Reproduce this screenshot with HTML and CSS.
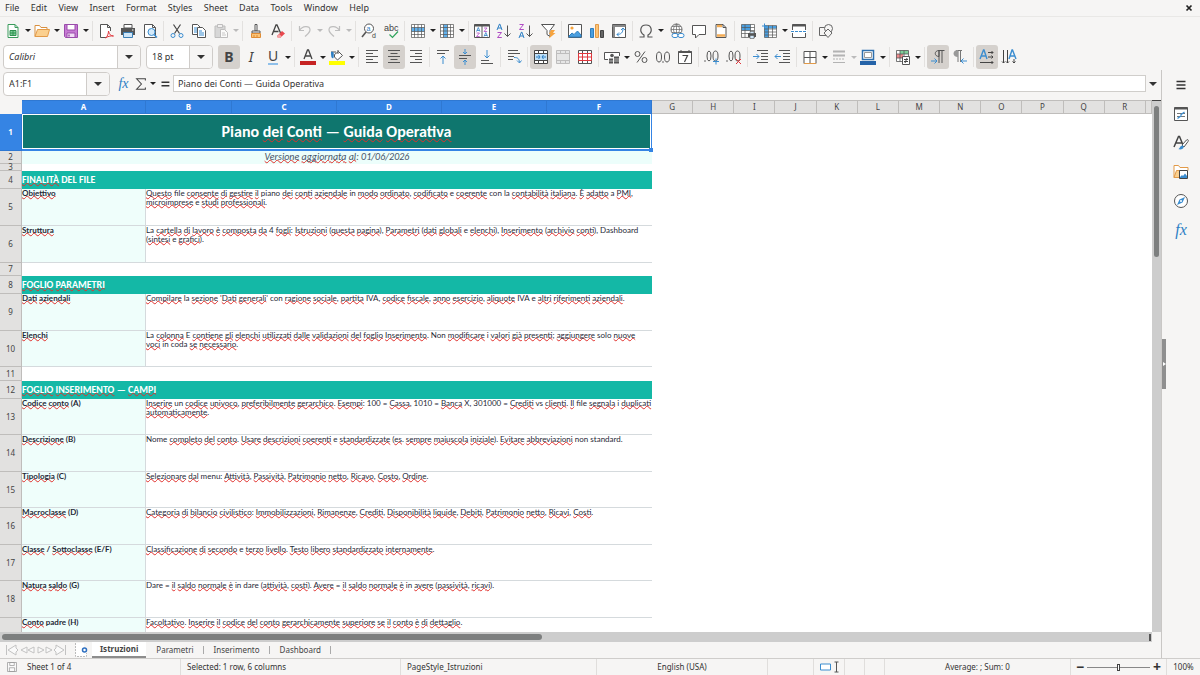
FILE: index.html
```html
<!DOCTYPE html>
<html lang="it">
<head>
<meta charset="utf-8">
<title>Piano dei Conti</title>
<link rel="stylesheet" href="styles.css">
</head>
<body>
<nav class="menubar">
  <div class="menus"><button>File</button><button>Edit</button><button>View</button><button>Insert</button><button>Format</button><button>Styles</button><button>Sheet</button><button>Data</button><button>Tools</button><button>Window</button><button>Help</button></div>
  <button class="close" aria-label="Close"><svg viewBox="0 0 8 8"><path d="M1.500 1.500l5 5M6.500 1.500l-5 5" stroke="#222" stroke-width="1.700"/></svg></button>
</nav>

<div class="toolbar" role="toolbar" aria-label="Standard">
  <button class="tb" aria-label="New"><svg viewBox="0 0 16 16"><path d="M3 1.500h7l3 3v10H3z" fill="#fff" stroke="#3a9b5c"/><path d="M10 1.500v3h3" stroke="#3a9b5c"/><path d="M5 7.500h6v5H5zM5 10h6M8 7.500v5" fill="#7fd09a" stroke="#2f9150"/></svg></button><button class="caret" aria-label="New options"></button>
  <button class="tb" aria-label="Open"><svg viewBox="0 0 16 16"><path d="M1 13.500v-11h4.500l1.500 2h6v2" fill="#fff" stroke="#d9903f"/><path d="M1 13.500l2.500-7h12l-2 7z" fill="#fbd08f" stroke="#e29a48"/></svg></button><button class="caret" aria-label="Open options"></button>
  <button class="tb" aria-label="Save"><svg viewBox="0 0 16 16"><path d="M1.500 1.500h13v13h-12l-1-1z" fill="#c77ad4" stroke="#9a4cab"/><path d="M4 1.500h8v5.500H4z" fill="#fff" stroke="#9a4cab"/><path d="M4 10h8v4.500H4z" fill="#f1dcf5" stroke="#9a4cab"/><path d="M6 11.500v2" stroke="#9a4cab" stroke-width="1.500"/></svg></button><button class="caret" aria-label="Save options"></button>
  <i class="sep"></i>
  <button class="tb" aria-label="Export as PDF"><svg viewBox="0 0 16 16"><path d="M8 14.500H2.500v-13h7l3 3V8M9.500 1.500v3h3" fill="#fff" stroke="#555"/><path d="M7.500 15c2-1.500 3-4.500 3-7 .5 3.500 2.500 5 5 5-3-.5-6 .5-8 2z" fill="#fff" stroke="#e0383e"/></svg></button>
  <button class="tb" aria-label="Print"><svg viewBox="0 0 16 16"><path d="M4 1.500h8V5H4z" fill="#fff" stroke="#555"/><path d="M1 5h14v7H1z" fill="#555"/><path d="M3.500 9.500h9v5h-9z" fill="#cfe6f8" stroke="#3c7fb4"/><path d="M12 7h1.500" stroke="#fff"/></svg></button>
  <button class="tb" aria-label="Print preview"><svg viewBox="0 0 16 16"><path d="M2.500 1.500h8l3 3v10h-11z" fill="#fff" stroke="#555"/><path d="M10.500 1.500v3h3" stroke="#555"/><circle cx="9.500" cy="9" r="3.500" fill="#d4eafa" stroke="#3b8dd0"/><path d="M12 11.500l3 3" stroke="#3b8dd0" stroke-width="1.500"/></svg></button>
  <i class="sep"></i>
  <button class="tb" aria-label="Cut"><svg viewBox="0 0 16 16"><path d="M4.500 1.500l6 9M11.500 1.500l-6 9" stroke="#444" stroke-width="1.200"/><circle cx="4" cy="12.500" r="2" stroke="#3b8dd0"/><circle cx="12" cy="12.500" r="2" stroke="#3b8dd0"/></svg></button>
  <button class="tb" aria-label="Copy"><svg viewBox="0 0 16 16"><path d="M1.500 1.500h5l3 3v7h-8z" fill="#fff" stroke="#555"/><path d="M3 5h3M3 7h3M3 9h3" stroke="#3b8dd0"/><path d="M6.500 4.500h5l3 3v7h-8z" fill="#fff" stroke="#555"/><path d="M8 8h3M8 10h5M8 12h5" stroke="#3b8dd0"/></svg></button>
  <button class="tb dim" aria-label="Paste"><svg viewBox="0 0 16 16"><path d="M2 3h10v11.500H2z" fill="#c4c4c4" stroke="#999"/><path d="M4.500 1.500h5v3h-5z" fill="#eee" stroke="#999"/><path d="M7.500 6.500h4l3 3v5h-7z" fill="#fff" stroke="#999"/><path d="M9 10h3M9 12h4" stroke="#aaa"/></svg></button><button class="caret dim" aria-label="Paste options"></button>
  <i class="sep"></i>
  <button class="tb" aria-label="Clone formatting"><svg viewBox="0 0 16 16"><path d="M7 1.500h2V8H7z" fill="#fff" stroke="#555"/><path d="M4 8h8v2H4z" fill="#fff" stroke="#555"/><path d="M3.500 10.500h9v4h-9z" fill="#fbc478" stroke="#df8c35"/><path d="M6 12v2M9 12v2" stroke="#df8c35"/></svg></button>
  <button class="tb" aria-label="Clear formatting"><svg viewBox="0 0 16 16"><path d="M2 12L6 2h1l4 9M3.500 8.500h5" stroke="#444" stroke-width="1.300"/><path d="M7 13l5-5 3 2.500-5 4.500H8z" fill="#e8484e"/><path d="M7 13l2-2 3 2.500-2 1.500H8z" fill="#f5a3a5"/></svg></button>
  <i class="sep"></i>
  <button class="tb dim" aria-label="Undo"><svg viewBox="0 0 16 16"><path d="M2.500 3v4.500H7M2.500 7.500c3-5 10-5 10.500-1 .3 3-3 5-5 7" stroke="#999" stroke-width="1.200"/></svg></button><button class="caret dim" aria-label="Undo list"></button>
  <button class="tb dim" aria-label="Redo"><svg viewBox="0 0 16 16"><path d="M13.500 3v4.500H9M13.500 7.500c-3-5-10-5-10.500-1-.3 3 3 5 5 7" stroke="#999" stroke-width="1.200"/></svg></button><button class="caret dim" aria-label="Redo list"></button>
  <i class="sep"></i>
  <button class="tb" aria-label="Find and replace"><svg viewBox="0 0 16 16"><circle cx="8" cy="5.500" r="4.500" fill="#fff" stroke="#555"/><path d="M5 9l-4 5" stroke="#555" stroke-width="1.600"/><text x="5.500" y="7.500" class="g md blue">a</text><text x="11" y="15" class="g md">d</text></svg></button>
  <button class="tb" aria-label="Spelling"><svg viewBox="0 0 16 16"><text x="1" y="8" class="g">abc</text><path d="M6.500 11.500l3 3 5.500-6" stroke="#2fa35c" stroke-width="1.200"/></svg></button>
  <i class="sep"></i>
  <button class="tb" aria-label="Row"><svg viewBox="0 0 16 16"><path d="M1.500 1.500h13v13h-13z" fill="#fff"/><path d="M1.500 4.500h13v4h-13z" fill="#62b1ec"/><path d="M1.500 1.500h13v13h-13zM1.500 4.500h13M1.500 8.500h13M1.500 11.500h13M4.500 1.500v13M8 1.500v13M11.500 1.500v13" stroke="#555" stroke-width=".7"/></svg></button><button class="caret" aria-label="Row options"></button>
  <button class="tb" aria-label="Column"><svg viewBox="0 0 16 16"><path d="M1.500 1.500h13v13h-13z" fill="#fff"/><path d="M4.500 1.500h4v13h-4z" fill="#62b1ec"/><path d="M1.500 1.500h13v13h-13zM1.500 4.500h13M1.500 8h13M1.500 11.500h13M4.500 1.500v13M8.500 1.500v13M11.500 1.500v13" stroke="#555" stroke-width=".7"/></svg></button><button class="caret" aria-label="Column options"></button>
  <i class="sep"></i>
  <button class="tb" aria-label="Sort"><svg viewBox="0 0 16 16"><path d="M.5 1.500h15v13H.5z" fill="#fff" stroke="#555"/><path d="M.5 1.500h15v2H.5z" fill="#555"/><path d="M8 3v11.500" stroke="#555"/><path d="M2.500 8.500L4.300 4.500 6 8.500M3 7.500h2.500M10 13.500l1.800-4 1.800 4M10.500 12.500H13" stroke="#2d7fc4" stroke-width=".8"/><path d="M2.500 10h3l-3 3.500h3.200M10 5h3l-3 3.500h3.200" stroke="#b04cc4" stroke-width=".8"/></svg></button>
  <button class="tb" aria-label="Sort ascending"><svg viewBox="0 0 16 16"><path d="M1 7l2.500-6h.3L6 7M1.800 5h3.500" stroke="#2d7fc4"/><path d="M1.500 9.500h4l-4 5h4.300" stroke="#b04cc4"/><path d="M11.500 2.500v11M8.500 10.500l3 3 3-3" stroke="#555"/></svg></button>
  <button class="tb" aria-label="Sort descending"><svg viewBox="0 0 16 16"><path d="M1.500 1.500h4l-4 5h4.300" stroke="#b04cc4"/><path d="M1 15l2.500-6h.3L6 15M1.800 13h3.500" stroke="#2d7fc4"/><path d="M11.500 2.500v11M8.500 10.500l3 3 3-3" stroke="#555"/></svg></button>
  <button class="tb" aria-label="AutoFilter"><svg viewBox="0 0 16 16"><path d="M1.500 1.500h13L10 7.500v6l-3-2v-4z" fill="#fff" stroke="#555"/><path d="M11 7h4l-2 3h2.500L9 15.500 10.500 11H9z" fill="#f6a33d"/></svg></button>
  <i class="sep"></i>
  <button class="tb" aria-label="Insert image"><svg viewBox="0 0 16 16"><path d="M1.500 1.500h13v13h-13z" fill="#fff" stroke="#555"/><circle cx="5" cy="5" r="1.600" fill="#f6a33d"/><path d="M2 13l3-3 2 1.500L10.500 8l3.500 4v2H2z" fill="#4a9fe0" stroke="#2e7fc0"/></svg></button>
  <button class="tb" aria-label="Insert chart"><svg viewBox="0 0 16 16"><path d="M1.500 5.500h3v9h-3z" fill="#4a9fe0" stroke="#2e7fc0"/><path d="M6.500 1.500h3v13h-3z" fill="#fbc478" stroke="#e29a48"/><path d="M11.500 7.500h3v7h-3z" fill="#666" stroke="#444"/></svg></button>
  <button class="tb" aria-label="Insert pivot table"><svg viewBox="0 0 16 16"><path d="M1.500 1.500h13v13h-13z" fill="#fff" stroke="#555"/><path d="M1.500 3h13M3 3v11.500" stroke="#888" stroke-width="2"/><path d="M6 11.500c4 0 6-2 6-6M10 7l2-2 2 2M8 9.500l-2 2 2 2" stroke="#3b8dd0"/></svg></button>
  <i class="sep"></i>
  <button class="tb" aria-label="Special character"><svg viewBox="0 0 16 16"><path d="M1.500 14h4.500v-2C1 9 2 2 8 2s7 7 2 10v2h4.500" stroke="#555" stroke-width="1.200"/></svg></button><button class="caret" aria-label="Special character list"></button>
  <i class="space"></i>
  <button class="tb" aria-label="Hyperlink"><svg viewBox="0 0 16 16"><circle cx="7.500" cy="6.500" r="5.500" fill="#fff" stroke="#666"/><path d="M2 6.500h11M7.500 1v11M3 3.500h9M3 9.500h9M7.500 1c-4 3-4 8 0 11M7.500 1c4 3 4 8 0 11" stroke="#666" stroke-width=".7"/><rect x="3" y="10.500" width="6" height="4" rx="2" fill="#fff" stroke="#3b8dd0"/><rect x="9" y="10.500" width="6" height="4" rx="2" fill="#fff" stroke="#3b8dd0"/></svg></button>
  <button class="tb" aria-label="Comment"><svg viewBox="0 0 16 16"><path d="M1.500 2.500h13v9H8L4.500 15v-3.500h-3z" fill="#fff" stroke="#555"/></svg></button>
  <button class="tb" aria-label="Headers and footers"><svg viewBox="0 0 16 16"><path d="M3 1.500h7l3 3v10H3z" fill="#fff" stroke="#555"/><path d="M4 3h5M4 12.500h8" stroke="#f3ac55" stroke-width="2.500"/><path d="M10 1.500v3h3" stroke="#555"/></svg></button>
  <i class="sep"></i>
  <button class="tb" aria-label="Define print area"><svg viewBox="0 0 16 16"><path d="M1.500 1.500h13v11h-13z" fill="#fff"/><path d="M1.500 1.500h9v6h-9z" fill="#4a9fe0"/><path d="M1.500 1.500h13v13h-13zM1.500 4.500h13M1.500 7.500h13M1.500 10.500h13M5 1.500v13M10.500 1.500v13" stroke="#555" stroke-width=".7"/><path d="M8 10h8v4H8z" fill="#555"/><path d="M10 8.500h4v2h-4zM10 12.500h4v3h-4z" fill="#cfe6f8" stroke="#555" stroke-width=".6"/></svg></button>
  <button class="tb" aria-label="Freeze rows and columns"><svg viewBox="0 0 16 16"><path d="M2.500 3.500h12v11h-12z" fill="#fff"/><path d="M2.500 3.500h4v11h-4zM2 3h13v2.500H2z" fill="#4a9fe0"/><path d="M2.500 2.500h12v12h-12zM2.500 6h12M2.500 9h12M2.500 12h12M6.500 2.500v12M10.500 2.500v12" stroke="#555" stroke-width=".7"/><path d="M0 3h5M2.500.5v5" stroke="#3b8dd0"/></svg></button><button class="caret" aria-label="Freeze options"></button>
  <button class="tb" aria-label="Split window"><svg viewBox="0 0 16 16"><path d="M1.500 1.500h13v13h-13z" fill="#fff" stroke="#555"/><path d="M1.500 2.500h13" stroke="#555" stroke-width="2"/><path d="M0 8.500h16" stroke="#fff" stroke-width="3"/><path d="M0 8.500h16" stroke="#3b8dd0" stroke-dasharray="3 1"/></svg></button>
  <i class="sep"></i>
  <button class="tb" aria-label="Draw functions"><svg viewBox="0 0 16 16"><path d="M1.500 4.500h8v8h-8z" stroke="#666"/><circle cx="10.500" cy="5.500" r="4" fill="#f6f5f4" stroke="#666"/><path d="M10 6l4 4-4 4.500L6 10z" fill="#f6f5f4" stroke="#666"/></svg></button>
</div>

<div class="toolbar fmt" role="toolbar" aria-label="Formatting">
  <div class="combo font"><input aria-label="Font name" value="Calibri"><button aria-label="Font list"></button></div>
  <div class="combo size"><input aria-label="Font size" value="18 pt"><button aria-label="Size list"></button></div>
  <button class="tb on" aria-label="Bold"><b>B</b></button>
  <button class="tb" aria-label="Italic"><em>I</em></button>
  <button class="tb" aria-label="Underline"><span class="ul">U</span></button><button class="caret" aria-label="Underline options"></button>
  <i class="sep"></i>
  <button class="tb" aria-label="Font color"><svg viewBox="0 0 16 16"><path d="M4 10L7.500 1h1L12 10M5.500 7h5" stroke="#444" stroke-width="1.300"/><path d="M0 12h16v4H0z" fill="#c62323"/></svg></button><button class="caret" aria-label="Font color list"></button>
  <button class="tb" aria-label="Highlighting"><svg viewBox="0 0 16 16"><path d="M5.500 5.500l4-3 4 4-5 4.500-3-3z" fill="#fff" stroke="#555"/><path d="M9 1v4M2 3h5" stroke="#555"/><path d="M2 3c3-1 3 1 2.500 6C2.500 10 2 8 2 3z" fill="#2d7fc4"/><path d="M0 12h16v4H0z" fill="#ff0"/></svg></button><button class="caret" aria-label="Highlighting list"></button>
  <i class="sep"></i>
  <button class="tb" aria-label="Align left"><svg viewBox="0 0 16 16"><path d="M2 1.500h12M2 4.500h7M2 7.500h12M2 10.500h7M2 13.500h12" stroke="#555"/></svg></button>
  <button class="tb on" aria-label="Align center"><svg viewBox="0 0 16 16"><path d="M2 1.500h12M4.500 4.500h7M2 7.500h12M4.500 10.500h7M2 13.500h12" stroke="#555"/></svg></button>
  <button class="tb" aria-label="Align right"><svg viewBox="0 0 16 16"><path d="M2 1.500h12M7 4.500h7M2 7.500h12M7 10.500h7M2 13.500h12" stroke="#555"/></svg></button>
  <i class="sep"></i>
  <button class="tb" aria-label="Align top"><svg viewBox="0 0 16 16"><path d="M2 1.500h12M2 4.500h8" stroke="#555"/><path d="M8 15V7M5.500 9.500L8 7l2.500 2.500" stroke="#3b8dd0"/></svg></button>
  <button class="tb on" aria-label="Center vertically"><svg viewBox="0 0 16 16"><path d="M2 6.500h12M2 9.500h8" stroke="#555"/><path d="M8 0v5M6 3l2 2 2-2M8 16v-5M6 13l2-2 2 2" stroke="#3b8dd0"/></svg></button>
  <button class="tb" aria-label="Align bottom"><svg viewBox="0 0 16 16"><path d="M2 14.500h12M2 11.500h8" stroke="#555"/><path d="M8 1v8M5.500 6.500L8 9l2.500-2.500" stroke="#3b8dd0"/></svg></button>
  <i class="sep"></i>
  <button class="tb" aria-label="Wrap text"><svg viewBox="0 0 16 16"><path d="M2 1.500h10M2 4.500h12M2 7.500h6M2 10.500h5" stroke="#555"/><path d="M8 8.500c4 0 5 1 5.500 5M11 11.500l2.500 2.500 2-2.500" stroke="#3b8dd0"/></svg></button>
  <i class="sep"></i>
  <button class="tb on" aria-label="Merge and center cells"><svg viewBox="0 0 16 16"><path d="M1.500 1.500h13v13h-13z" fill="#fff" stroke="#444"/><path d="M1.500 4.500h13M1.500 11.500h13M5.500 1.500v3M10.500 1.500v3M5.500 11.500v3M10.500 11.500v3" stroke="#444"/><path d="M2 5h12v6H2z" fill="#bfe0f8"/><path d="M3 8h4M13 8H9M5.500 6L7 8l-1.500 2M10.500 6L9 8l1.500 2" stroke="#2d7fc4"/></svg></button>
  <button class="tb dim" aria-label="Merge cells"><svg viewBox="0 0 16 16"><path d="M1.500 1.500h13v13h-13zM1.500 4.500h13M1.500 11.500h13M5.500 1.500v3M10.500 1.500v3M5.500 11.500v3M10.500 11.500v3" fill="#ddd" stroke="#999"/></svg></button>
  <button class="tb" aria-label="Split cells"><svg viewBox="0 0 16 16"><path d="M1.500 1.500h13v13h-13zM5.500 1.500v3M10.500 1.500v3M5.500 11.500v3M10.500 11.500v3" fill="#fff" stroke="#555"/><path d="M1.500 4.500h13v7h-13zM5.500 4.500v7M10.500 4.500v7M1.500 8h13" stroke="#e0383e"/></svg></button>
  <i class="sep"></i>
  <button class="tb" aria-label="Format as currency"><svg viewBox="0 0 16 16"><path d="M4 10.500H.5v-7h15V7" fill="#fff" stroke="#555"/><circle cx="8" cy="6.500" r="1.800" fill="#555"/><path d="M5 9.500h4v5H5zM10 7.500h5v7h-5z" fill="#555"/><path d="M10 10h5M10 12h5M5 12h4" stroke="#fff" stroke-width=".6"/></svg></button><button class="caret" aria-label="Currency list"></button>
  <button class="tb" aria-label="Format as percent"><svg viewBox="0 0 16 16"><circle cx="4.500" cy="5" r="2.500" stroke="#555"/><circle cx="11.500" cy="11" r="2.500" stroke="#555"/><path d="M12 2.500L4 13.500" stroke="#555"/></svg></button>
  <button class="tb" aria-label="Format as number"><svg viewBox="0 0 16 16"><ellipse cx="4" cy="8" rx="2.500" ry="5" stroke="#555"/><ellipse cx="12" cy="8" rx="2.500" ry="5" stroke="#555"/><circle cx="8" cy="13" r=".8" fill="#555"/></svg></button>
  <button class="tb" aria-label="Format as date"><svg viewBox="0 0 16 16"><path d="M1.500 2.500h13v12h-13z" fill="#fff" stroke="#555"/><path d="M1.500 3h13" stroke="#555" stroke-width="2"/><path d="M4 1v2M12 1v2" stroke="#555"/><path d="M5.500 6.500h5L7.500 13" stroke="#444" stroke-width="1.200"/></svg></button>
  <i class="sep"></i>
  <button class="tb" aria-label="Add decimal place"><svg viewBox="0 0 16 16"><circle cx="1" cy="12" r=".8" fill="#555"/><ellipse cx="5" cy="7" rx="2" ry="5" stroke="#555"/><ellipse cx="11.500" cy="7" rx="2.500" ry="5" stroke="#555"/><path d="M9 12.500h6M12 9.500v6" stroke="#3b8dd0"/></svg></button>
  <button class="tb" aria-label="Delete decimal place"><svg viewBox="0 0 16 16"><circle cx="1" cy="12" r=".8" fill="#555"/><ellipse cx="5" cy="7" rx="2" ry="5" stroke="#555"/><ellipse cx="11.500" cy="7" rx="2.500" ry="5" stroke="#555"/><path d="M10 10l5 5M15 10l-5 5" stroke="#e0383e"/></svg></button>
  <i class="sep"></i>
  <button class="tb" aria-label="Increase indent"><svg viewBox="0 0 16 16"><path d="M4 1.500h11M8 4.500h7M8 7.500h7M8 10.500h7M4 13.500h11" stroke="#555"/><path d="M0 7.500h6M3.500 5L6 7.500 3.500 10" stroke="#3b8dd0"/></svg></button>
  <button class="tb" aria-label="Decrease indent"><svg viewBox="0 0 16 16"><path d="M4 1.500h11M8 4.500h7M8 7.500h7M8 10.500h7M4 13.500h11" stroke="#555"/><path d="M0 7.500h6M2.500 5L0 7.500 2.500 10" stroke="#3b8dd0"/></svg></button>
  <i class="sep"></i>
  <button class="tb" aria-label="Borders"><svg viewBox="0 0 16 16"><path d="M2 14.500v-12h12v12M8 2.500v12M2 8.500h12" fill="#fff" stroke="#555"/><path d="M2 14.500h12" stroke="#e29a48"/></svg></button><button class="caret" aria-label="Borders list"></button>
  <button class="tb dim" aria-label="Border style"><svg viewBox="0 0 16 16"><path d="M2 2.500h12M2 6.500h12" stroke="#888" stroke-width="2"/><path d="M2 10h12" stroke="#888" stroke-dasharray="2 1"/><path d="M2 13.500h12" stroke="#888"/></svg></button><button class="caret dim" aria-label="Border style list"></button>
  <button class="tb" aria-label="Border color"><svg viewBox="0 0 16 16"><path d="M2.500 1.500h11v9h-11z" fill="#fff" stroke="#2d6fae" stroke-width="1.500"/><path d="M4.500 3.500h7v5h-7z" stroke="#999"/><path d="M0 12h16v4H0z" fill="#2563a8"/></svg></button><button class="caret" aria-label="Border color list"></button>
  <i class="sep"></i>
  <button class="tb" aria-label="Conditional formatting"><svg viewBox="0 0 16 16"><path d="M1.500 1.500h12v11h-12z" fill="#fff"/><path d="M5 1.500h8.500V5H5z" fill="#7fd09a"/><path d="M1.500 5H8v4H1.500z" fill="#f08a8c"/><path d="M1.500 1.500h12v11h-12zM1.500 5h12M1.500 9h12M5 1.500v11M9 1.500v11" stroke="#555" stroke-width=".8"/><path d="M7.500 7.500h7v8h-7z" fill="#fff" stroke="#555"/><path d="M9 10.500h4M9 12.500h4M12 9l-2 5" stroke="#444"/></svg></button><button class="caret" aria-label="Conditional list"></button>
  <i class="sep"></i>
  <button class="tb on" aria-label="Left to right"><svg viewBox="0 0 16 16"><path d="M9 1v13M12 1v13M8 1.500h6.500" stroke="#555"/><path d="M9 1.500c-5 0-5 6 0 6z" stroke="#555"/><path d="M1 12h6M4.500 9.500L7 12l-2.500 2.500" stroke="#3b8dd0"/></svg></button>
  <button class="tb" aria-label="Right to left"><svg viewBox="0 0 16 16"><path d="M6 1v12M8.500 1v12M4 1.500h6" stroke="#777"/><path d="M6 1c-6 0-6 7 0 7z" fill="#999"/><path d="M9 12h6M11.500 9.500L9 12l2.500 2.500" stroke="#3b8dd0"/></svg></button>
  <i class="sep"></i>
  <button class="tb on" aria-label="Text direction horizontal"><svg viewBox="0 0 16 16"><path d="M1 10L4.500 1h.5l3 9M2.500 7h4.500" stroke="#3b8dd0" stroke-width="1.400"/><path d="M9 3.500h5M12.500 2L14 3.500 12.500 5M9 8h5M12.500 6.500L14 8l-1.500 1.500M1 13.500h13M12.500 12l1.500 1.500-1.500 1.500" stroke="#444"/></svg></button>
  <button class="tb" aria-label="Text direction vertical"><svg viewBox="0 0 16 16"><path d="M8 10l3-9h.5L15 10M9 7h4.500" stroke="#3b8dd0" stroke-width="1.400"/><path d="M2.500 1v13M1 12.500L2.500 14 4 12.500M6.500 1v13M5 12.500L6.500 14 8 12.500M13 10v4M11.500 12.500L13 14l1.500-1.500" stroke="#444"/></svg></button>
</div>

<div class="work">
 <main class="doc">
  <div class="formula">
    <div class="combo name"><input aria-label="Name box" value="A1:F1"><button aria-label="Names"></button></div>
    <button class="fb" aria-label="Function wizard"><span class="fx">fx</span></button>
    <button class="fb" aria-label="Select function"><svg viewBox="0 0 16 16"><path d="M13 4V2H3l5.500 6L3 14h10v-2" stroke="#444" stroke-width="1.200"/></svg></button><button class="caret" aria-label="Function list"></button>
    <button class="fb" aria-label="Formula"><svg viewBox="0 0 16 16"><path d="M4 6h9M4 10h9" stroke="#333" stroke-width="1.600"/></svg></button>
    <input class="line" aria-label="Input line" value="Piano dei Conti — Guida Operativa">
    <button class="expand" aria-label="Expand formula bar"></button>
  </div>

  <div class="view">
   <div class="sheet">
    <table>
      <colgroup><col class="ch"><col class="ca"><col class="cb"><col class="cc"><col class="cc"><col class="cc"><col class="cc"><col span="12"><col class="ce"></colgroup>
      <thead><tr><td class="corner"></td><th class="sel">A</th><th class="sel">B</th><th class="sel">C</th><th class="sel">D</th><th class="sel">E</th><th class="sel">F</th><th>G</th><th>H</th><th>I</th><th>J</th><th>K</th><th>L</th><th>M</th><th>N</th><th>O</th><th>P</th><th>Q</th><th>R</th><th></th></tr></thead>
      <tbody>
      <tr class="r1"><th class="sel">1</th><td colspan="6" class="title">Piano <u>dei</u> <u>Conti</u> — <u>Guida</u> <u>Operativa</u></td></tr>
      <tr class="r2"><th>2</th><td colspan="6" class="sub"><u>Versione</u> <u>aggiornata</u> <u>al</u>: 01/06/2026</td></tr>
      <tr class="r3"><th>3</th><td colspan="6"></td></tr>
      <tr class="sec"><th>4</th><td colspan="6"><u>FINALITÀ</u> DEL FILE</td></tr>
      <tr class="tall more"><th>5</th><td class="k"><u>Obiettivo</u></td><td colspan="5"><u>Questo</u> file <u>consente</u> <u>di</u> <u>gestire</u> <u>il</u> piano <u>dei</u> <u>conti</u> <u>aziendale</u> in <u>modo</u> <u>ordinato</u>, <u>codificato</u> e <u>coerente</u> con la <u>contabilità</u> <u>italiana</u>. <u>È</u> <u>adatto</u> a <u>PMI</u>,<br><u>microimprese</u> e <u>studi</u> <u>professionali</u>.</td></tr>
      <tr class="tall more"><th>6</th><td class="k"><u>Struttura</u></td><td colspan="5">La <u>cartella</u> <u>di</u> <u>lavoro</u> <u>è</u> <u>composta</u> <u>da</u> 4 <u>fogli</u>: <u>Istruzioni</u> (<u>questa</u> <u>pagina</u>), <u>Parametri</u> (<u>dati</u> <u>globali</u> e <u>elenchi</u>), <u>Inserimento</u> (<u>archivio</u> <u>conti</u>), Dashboard<br>(<u>sintesi</u> e <u>grafici</u>).</td></tr>
      <tr class="gap less"><th>7</th><td colspan="6"></td></tr>
      <tr class="sec"><th>8</th><td colspan="6"><u>FOGLIO</u> <u>PARAMETRI</u></td></tr>
      <tr class="tall more"><th>9</th><td class="k"><u>Dati</u> <u>aziendali</u></td><td colspan="5"><u>Compilare</u> la <u>sezione</u> '<u>Dati</u> <u>generali</u>' con <u>ragione</u> <u>sociale</u>, <u>partita</u> IVA, <u>codice</u> <u>fiscale</u>, <u>anno</u> <u>esercizio</u>, <u>aliquote</u> IVA e <u>altri</u> <u>riferimenti</u> <u>aziendali</u>.</td></tr>
      <tr class="tall"><th>10</th><td class="k"><u>Elenchi</u></td><td colspan="5">La <u>colonna</u> E <u>contiene</u> <u>gli</u> <u>elenchi</u> <u>utilizzati</u> <u>dalle</u> <u>validazioni</u> <u>del</u> <u>foglio</u> <u>Inserimento</u>. Non <u>modificare</u> i <u>valori</u> <u>già</u> <u>presenti</u>; <u>aggiungere</u> solo <u>nuove</u><br><u>voci</u> in coda <u>se</u> <u>necessario</u>.</td></tr>
      <tr class="gap"><th>11</th><td colspan="6"></td></tr>
      <tr class="sec"><th>12</th><td colspan="6"><u>FOGLIO</u> <u>INSERIMENTO</u> — <u>CAMPI</u></td></tr>
      <tr class="tall"><th>13</th><td class="k"><u>Codice</u> <u>conto</u> (A)</td><td colspan="5"><u>Inserire</u> un <u>codice</u> <u>univoco</u>, <u>preferibilmente</u> <u>gerarchico</u>. <u>Esempi</u>: 100 = <u>Cassa</u>, 1010 = <u>Banca</u> X, 301000 = <u>Crediti</u> vs <u>clienti</u>. <u>Il</u> file <u>segnala</u> i <u>duplicati</u><br><u>automaticamente</u>.</td></tr>
      <tr class="tall more"><th>14</th><td class="k"><u>Descrizione</u> (B)</td><td colspan="5">Nome <u>completo</u> <u>del</u> <u>conto</u>. <u>Usare</u> <u>descrizioni</u> <u>coerenti</u> e <u>standardizzate</u> (<u>es</u>. <u>sempre</u> <u>maiuscola</u> <u>iniziale</u>). <u>Evitare</u> <u>abbreviazioni</u> non standard.</td></tr>
      <tr class="tall"><th>15</th><td class="k"><u>Tipologia</u> (C)</td><td colspan="5"><u>Selezionare</u> <u>dal</u> menu: <u>Attività</u>, <u>Passività</u>, <u>Patrimonio</u> <u>netto</u>, <u>Ricavo</u>, <u>Costo</u>, <u>Ordine</u>.</td></tr>
      <tr class="tall more"><th>16</th><td class="k"><u>Macroclasse</u> (D)</td><td colspan="5"><u>Categoria</u> <u>di</u> <u>bilancio</u> <u>civilistico</u>: <u>Immobilizzazioni</u>, <u>Rimanenze</u>, <u>Crediti</u>, <u>Disponibilità</u> <u>liquide</u>, <u>Debiti</u>, <u>Patrimonio</u> <u>netto</u>, <u>Ricavi</u>, <u>Costi</u>.</td></tr>
      <tr class="tall"><th>17</th><td class="k"><u>Classe</u> / <u>Sottoclasse</u> (E/F)</td><td colspan="5"><u>Classificazione</u> <u>di</u> <u>secondo</u> e <u>terzo</u> <u>livello</u>. <u>Testo</u> <u>libero</u> <u>standardizzato</u> <u>internamente</u>.</td></tr>
      <tr class="tall more"><th>18</th><td class="k"><u>Natura</u> <u>saldo</u> (G)</td><td colspan="5">Dare = <u>il</u> <u>saldo</u> <u>normale</u> <u>è</u> in dare (<u>attività</u>, <u>costi</u>). <u>Avere</u> = <u>il</u> <u>saldo</u> <u>normale</u> <u>è</u> in <u>avere</u> (<u>passività</u>, <u>ricavi</u>).</td></tr>
      <tr class="tall"><th></th><td class="k"><u>Conto</u> padre (H)</td><td colspan="5"><u>Facoltativo</u>. <u>Inserire</u> <u>il</u> <u>codice</u> <u>del</u> <u>conto</u> <u>gerarchicamente</u> <u>superiore</u> <u>se</u> <u>il</u> <u>conto</u> <u>è</u> <u>di</u> <u>dettaglio</u>.</td></tr>
      </tbody>
    </table>
   </div>
   <div class="vscroll"><div class="vthumb"></div></div>
  </div>
  <div class="hscroll"><div class="hthumb"></div><div class="hend"></div></div>
  <div class="tabs">
    <button class="nav" aria-label="Sheet navigation"><svg viewBox="0 0 62 14" class="navicon"><path d="M1.500 2v10M11 2L3 7l8 5V9l2-2-2-2zM22 4l-6 3 6 3zM29 4l-6 3 6 3zM33 4l6 3-6 3zM41 4l6 3-6 3zM51 2l8 5-8 5V9l-2-2 2-2zM60.500 2v10" fill="#fafafa" stroke="#c2c2c2"/></svg></button>
    <button class="add" aria-label="Add sheet"><svg viewBox="0 0 14 14"><path d="M1.500 0v13.500h11V10" fill="#fff" stroke="#bbb" stroke-dasharray="2 1"/><path d="M2 0h8v13H2z" fill="#fff"/><circle cx="10.500" cy="7" r="2" fill="#fff" stroke="#2d6fc0" stroke-width="1.500"/></svg></button>
    <button class="tab active">Istruzioni</button><button class="tab">Parametri</button><button class="tab">Inserimento</button><button class="tab">Dashboard</button>
  </div>
 </main>
 <div class="handle"></div>
 <aside class="side">
  <button aria-label="Sidebar settings"><svg viewBox="0 0 16 16"><path d="M3.500 4.500h9M3.500 8h9M3.500 11.500h9" stroke="#333" stroke-width="1.500"/></svg></button>
  <button aria-label="Properties"><svg viewBox="0 0 16 16"><path d="M1.500 1.500h13v13h-13z" fill="#fff" stroke="#555"/><path d="M1.500 2.500h13" stroke="#555" stroke-width="2"/><path d="M4 7.500h8M4 10.500h8" stroke="#777"/><path d="M7.500 9l4-3M4.500 12.500l4-3" stroke="#3b8dd0" stroke-width="1.300"/></svg></button>
  <button aria-label="Styles"><svg viewBox="0 0 16 16"><path d="M1 12L5.500 1.500h1L10 10M3 8h5.500" stroke="#444" stroke-width="1.500"/><path d="M9 10l4.500-5c1-1 2.500 0 1.500 1.500L11 12z" fill="#fff" stroke="#555"/><path d="M5 14c2 0 2-4 5-3.500 2 2-.5 5-5 3.500z" fill="#3b8dd0"/></svg></button>
  <button aria-label="Gallery"><svg viewBox="0 0 16 16"><path d="M1 13.500v-12h4.500l1.500 2h8v3" fill="#fff" stroke="#e29a48"/><path d="M1 13.500l2.500-7h5v7z" fill="#fbd08f" stroke="#e29a48"/><path d="M6.500 6.500h8v8h-8z" fill="#fff" stroke="#444"/><path d="M7 13l2-2 1 1 2-2.500 2 2.500v2H7z" fill="#3b8dd0"/></svg></button>
  <button aria-label="Navigator"><svg viewBox="0 0 16 16"><circle cx="8" cy="8" r="6.500" fill="#fff" stroke="#555"/><path d="M12 4L9.500 9.500 4 12l2.500-5.500z" fill="#3b8dd0"/><circle cx="8" cy="8" r="1" fill="#fff"/></svg></button>
  <button aria-label="Functions"><span class="fx large">fx</span></button>
 </aside>
</div>

<footer class="status">
  <div class="doc-info"><svg viewBox="0 0 16 16"><path d="M2 2h12v12H2zM5 2h6v4H5zM4.500 9h7v5h-7z" fill="#fafafa" stroke="#999"/></svg><span>Sheet 1 of 4</span></div>
  <div class="left">Selected: 1 row, 6 columns</div>
  <div class="left">PageStyle_Istruzioni</div>
  <div>English (USA)</div>
  <div></div>
  <div class="mode"><svg viewBox="0 0 20 12"><path d="M1.500 3h10v6h-10z" fill="#fff" stroke="#3b8dd0"/><path d="M15.500 1h4M15.500 11h4M17.500 1v10" stroke="#555"/></svg></div>
  <div></div><div></div>
  <div>Average: ; Sum: 0</div>
  <div class="zoom"><button aria-label="Zoom out">−</button><input type="range" aria-label="Zoom" value="50"><button aria-label="Zoom in">+</button></div>
  <div>100%</div>
</footer>
</body>
</html>
```

FILE: styles.css
```css
* { box-sizing: border-box; }
body { margin: 0; height: 100vh; overflow: hidden; display: flex; flex-direction: column; background: #f6f5f4; color: #333; font: 9px/12px "Noto Sans", sans-serif; }
button, input { font: inherit; color: inherit; border: 0; background: none; padding: 0; margin: 0; outline: 0; }
svg { fill: none; display: block; overflow: visible; }

.menubar { flex: none; display: flex; justify-content: space-between; height: 17px; border-bottom: 1px solid #e9e8e6; }
.menus { display: flex; justify-content: space-between; width: 374px; }
.menus button { padding: 0 5px; }
.close { padding: 0 7px; }
.close svg { width: 8px; height: 8px; }

.toolbar { flex: none; display: flex; align-items: center; height: 27px; padding: 0 2px; }
.toolbar.fmt { height: 26px; }
.tb { flex: none; width: 22px; height: 24px; display: grid; place-items: center; border-radius: 3px; font-size: 14px; line-height: 16px; color: #444; }
.tb svg { width: 16px; height: 16px; }
.tb.on { background: #d5d1cd; }
.dim svg { opacity: .6; }
.ul { border-bottom: 2px solid #8fc0ea; line-height: 14px; }
.caret { flex: none; width: 7px; height: 20px; display: grid; place-items: center; }
.caret::before { content: ""; border: 3px solid transparent; border-top-color: #222; border-bottom: 0; }
.caret.dim::before { border-top-color: #bbb; }
.sep { flex: none; width: 1px; height: 20px; margin: 0 2px; background: #e3e1df; }
.caret + .sep { margin-left: 3px; }
.space { flex: none; width: 2px; }
.g { fill: #444; font: 9px/9px "Liberation Sans", sans-serif; }
.g.md { font-size: 7px; }
.g.blue { fill: #2d7fc4; }

.combo { flex: none; display: flex; height: 24px; border: 1px solid #cfccc9; border-radius: 4px; background: #fff; overflow: hidden; }
.combo input { flex: 1; min-width: 0; padding-left: 5px; }
.combo button { width: 23px; display: grid; place-items: center; background: #f6f5f4; border-left: 1px solid #cfccc9; }
.combo button::before, .expand::before { content: ""; border: 4px solid transparent; border-top-color: #333; border-bottom: 0; }
.fmt .combo { margin-right: 5px; }
.combo.font { width: 138px; font-style: italic; }
.combo.size { width: 67px; }
.fmt .combo.font { margin-left: 1px; }

.work { flex: 1; min-height: 0; display: flex; }
.doc { flex: 1; min-width: 0; display: flex; flex-direction: column; border-right: 1px solid #c9c7c5; }
.formula { flex: none; display: flex; align-items: center; height: 30px; padding: 1px 2px 4px 3px; }
.combo.name { width: 107px; margin-right: 5px; }
.fb { width: 17px; display: grid; place-items: center; }
.fb svg { width: 14px; height: 14px; }
.fx { font: italic 14px/16px "Liberation Serif", serif; color: #2d7fc4; }
.fx.large { font-size: 16px; }
.line { flex: 1; min-width: 0; height: 17px; padding: 0 4px; border: 1px solid #d0cecb; background: #fff; }
.expand { width: 13px; display: grid; place-items: center; }

.view { flex: 1; min-height: 0; display: flex; }
.sheet { flex: 1; min-width: 0; overflow: hidden; background: #fff; }
table { width: 100%; table-layout: fixed; border-collapse: separate; border-spacing: 0; font: 8px/9px Lato, sans-serif; }
.ch { width: 22px; }
.ca { width: 124px; }
.cb { width: 86px; }
.cc { width: 105px; }
.ce { width: 6px; }
th, td { padding: 0; }
th { background: #e2e1e0; border: 0 solid #bfbdbb; border-width: 0 1px 1px 0; font: 8px/12px "Noto Sans", sans-serif; color: #444; }
thead th { height: 14px; border-top-width: 1px; }
th.sel { background: #3584e4; border-color: #2f78d2; color: #fff; font-weight: 700; }
.corner { background: #f6f5f4; }
tbody td { vertical-align: top; white-space: nowrap; color: #1f2937; }
u { text-decoration: underline wavy #e0302c 1px; text-decoration-skip-ink: none; text-underline-offset: -1px; }
tbody td.title { position: relative; height: 37px; background: #0f766e; color: #fff; font: 700 16px/18px Carlito, Lato, sans-serif; text-align: center; vertical-align: middle; border: solid #3584e4; border-width: 0 1px 2px 0; box-shadow: inset 0 0 0 1px #fff; }
.title::after { content: ""; position: absolute; right: -2px; bottom: -3px; width: 4px; height: 4px; background: #3584e4; }
.title u { text-underline-offset: 1px; }
.r2 td { height: 13px; }
tbody .sub { background: #ecfefb; text-align: center; font: italic 10px/11px Carlito, Lato, sans-serif; color: #475569; }
.r3 th { height: 7px; line-height: 6px; }
.sec td { height: 18px; background: #14b8a6; color: #fff; font: 700 10px/17px Carlito, Lato, sans-serif; }
.gap td { height: 14px; }
.gap.less td { height: 13px; }
.tall td { height: 36px; border-bottom: 1px solid #d5dadd; }
.tall.more td { height: 37px; }
.tall .k { background: #effefb; border-right: 1px solid #d5dadd; font-weight: 700; }

.vscroll { width: 9px; background: #cdcdcd; padding: 5px 2px; border-top: 1px solid #444; }
.vthumb { height: 151px; border-radius: 3px; background: #7d7f7f; }
.hscroll { flex: none; height: 10px; margin-right: 9px; display: flex; align-items: center; justify-content: space-between; padding: 0 1px 0 2px; background: #cdcdcd; }
.hthumb { width: 47%; height: 6px; border-radius: 3px; background: #7d7f7f; }
.hend { width: 2px; height: 7px; background: #555; }
.tabs { flex: none; display: flex; height: 16px; font-size: 8px; }
.nav { margin-left: 5px; }
.navicon { width: 62px; height: 14px; }
.add { margin: 0 4px 0 7px; }
.add svg { width: 14px; height: 14px; }
.tab { padding: 0 10px; position: relative; color: #444; }
.tab:not(.active)::after { content: ""; position: absolute; right: 0; top: 4px; height: 8px; border-right: 1px solid #aaa; }
.tab.active { padding: 0 8px; background: #fff; border-bottom: 2px solid #8d8d8d; font-weight: 700; }
.handle { align-self: center; flex: none; width: 4px; height: 50px; background: #8f8f8f; display: grid; place-items: center; }
.handle::before { content: ""; border: 2px solid transparent; border-left: 3px solid #fff; border-right: 0; }
.side { width: 34px; display: flex; flex-direction: column; align-items: center; gap: 13px; padding: 7px 4px 0 0; }
.side button { width: 16px; height: 16px; display: grid; place-items: center; }
.side svg { width: 16px; height: 16px; }

.status { flex: none; display: grid; grid-template-columns: 181fr 220fr 196fr 171fr 46fr 31fr 20fr 20fr 186fr 96fr 33fr; height: 17px; border-top: 1px solid #cfcdcb; font-size: 8px; line-height: 16px; text-align: center; }
.status > div { min-width: 0; border-right: 1px solid #e0dedc; }
.status > div:last-child { border: 0; }
.status .left { padding-left: 6px; text-align: left; }
.doc-info { display: flex; align-items: center; gap: 9px; padding-left: 6px; }
.doc-info svg { width: 12px; height: 12px; }
.mode { display: grid; place-items: center; }
.mode svg { width: 20px; height: 12px; }
.zoom { display: flex; align-items: center; gap: 3px; padding: 0 5px; }
.zoom button { font-size: 14px; font-weight: 700; line-height: 14px; }
.zoom input { flex: 1; min-width: 0; height: 12px; appearance: none; }
.zoom input::-webkit-slider-runnable-track { height: 1px; background: #888; }
.zoom input::-webkit-slider-thumb { appearance: none; width: 3px; height: 7px; margin-top: -3px; border: 1px solid #444; background: #fff; }
```
